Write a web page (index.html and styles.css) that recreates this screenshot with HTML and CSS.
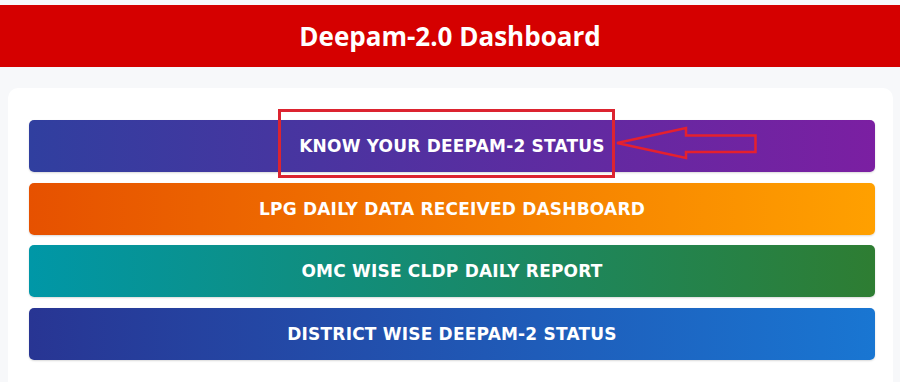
FILE: index.html
```html
<!DOCTYPE html>
<html lang="en">
<head>
  <meta charset="UTF-8">
  <meta name="viewport" content="width=device-width, initial-scale=1.0">
  <title>Deepam-2.0 Dashboard</title>
  <link rel="stylesheet" href="styles.css">
</head>
<body>
  <header>
    <h1>Deepam-2.0 Dashboard</h1>
  </header>

  <div class="container">
    <a href="#" class="dash-btn btn-status">KNOW YOUR DEEPAM-2 STATUS</a>
    <a href="#" class="dash-btn btn-lpg">LPG DAILY DATA RECEIVED DASHBOARD</a>
    <a href="#" class="dash-btn btn-omc">OMC WISE CLDP DAILY REPORT</a>
    <a href="#" class="dash-btn btn-district">DISTRICT WISE DEEPAM-2 STATUS</a>
  </div>

  <!-- annotation drawn on top of the screenshot -->
  <svg class="markup" width="900" height="382" viewBox="0 0 900 382">
    <rect x="279.5" y="110.5" width="334" height="66" fill="none" stroke="#dc2430" stroke-width="3"/>
    <polygon points="617,143 686,128 686,135.5 755.5,135.5 755.5,152 686,152 686,158"
             fill="none" stroke="#e5202e" stroke-width="2.5" stroke-linejoin="miter"/>
  </svg>
</body>
</html>
```

FILE: styles.css
```css
body {
  font-family: "Open Sans", Arial, sans-serif;
  background-color: #f7f8fa;
  margin: 0;
  padding: 5px 0 0 0;
  position: relative;
  height: 382px;
  box-sizing: border-box;
  overflow: hidden;
}
header {
  background-color: #d50000;
  height: 62px;
  display: flex;
  justify-content: center;
  align-items: center;
}
header h1 {
  margin: 0;
  color: #fff;
  font-size: 26px;
  font-weight: bold;
}
.container {
  background-color: #ffffff;
  border-radius: 10px;
  margin: 21px 7px 0 8px;
  padding: 32px 18px 40px 21px;
  display: flex;
  flex-direction: column;
  gap: 10.67px;
}
.dash-btn {
  height: 52px;
  display: flex;
  align-items: center;
  justify-content: center;
  border-radius: 5px;
  color: #fff;
  text-decoration: none;
  font-family: "DejaVu Sans", Verdana, sans-serif;
  font-weight: bold;
  font-size: 17px;
  letter-spacing: 0.2px;
  box-shadow: 0 1px 2px rgba(0, 0, 0, 0.15);
}
.btn-status {
  background: linear-gradient(to right, #303f9f, #7b1fa2);
}
.btn-lpg {
  background: linear-gradient(to right, #e65100, #ffa000);
}
.btn-omc {
  background: linear-gradient(to right, #0097a7, #2e7d32);
}
.btn-district {
  background: linear-gradient(to right, #283593, #1976d2);
}
.markup {
  position: absolute;
  left: 0;
  top: 0;
  pointer-events: none;
}
```
